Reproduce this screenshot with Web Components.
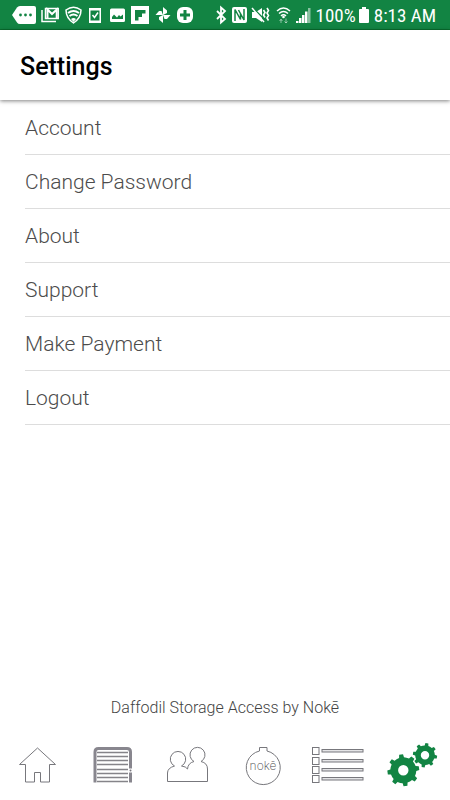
<!DOCTYPE html>
<html lang="en">
<head>
<meta charset="utf-8">
<meta name="viewport" content="width=device-width, initial-scale=1">
<title>Settings</title>
<style>
  body {
    margin: 0;
    font-family: Roboto, "Liberation Sans", sans-serif;
    background: #ffffff;
  }
</style>
</head>
<body>
<settings-app>
  <status-bar slot="status" battery="100%" time="8:13 AM"></status-bar>
  <app-header slot="header">Settings</app-header>
  <settings-item href="#account">Account</settings-item>
  <settings-item href="#password">Change Password</settings-item>
  <settings-item href="#about">About</settings-item>
  <settings-item href="#support">Support</settings-item>
  <settings-item href="#payment">Make Payment</settings-item>
  <settings-item href="#logout">Logout</settings-item>
  <span slot="credit">Daffodil Storage Access by Nokē</span>
  <tab-bar slot="tabs" active="settings"></tab-bar>
</settings-app>

<script>
// Status icons: width and drawing, all 20px high
const STATUS_ICONS = {
  chat: [24, `<path d="M0 10 5 2.500Q6 1 8 1H22Q24 1 24 3V17Q24 19 22 19H8Q6 19 5 17.500Z"/><g fill="#128443"><circle cx="8.500" cy="10" r="1.400"/><circle cx="13.500" cy="10" r="1.400"/><circle cx="18.500" cy="10" r="1.400"/></g>`],
  mail: [17, `<g fill="none" stroke="#fff" stroke-width="1.500"><path d="M0 5V16.500H14"/><path d="M3.500 3.500H16.200V13.500H3.500Z"/><path d="M5.500 13V4.500L10 9 14.700 4.500V13" stroke-width="2"/></g>`],
  shield: [17, `<g fill="none" stroke="#fff"><path d="M1 5Q8.500-.5 16 5 16 13 8.500 18 1 13 1 5Z" stroke-width="1.500"/><path d="M3 8Q8.500 4 14 8M4.500 11Q8.500 8 12.500 11" stroke-width="2"/></g><path d="M6 14Q8.500 12 11 14L8.500 17Z"/>`],
  phone: [16, `<path d="M1 3H13V18H1ZM2.500 5.500V15.500H11.500V5.500Z" fill-rule="evenodd"/><path d="m4.500 10 2 2.500L10 7.500" fill="none" stroke="#fff" stroke-width="1.500"/>`],
  image: [15, `<path d="M1.500 3.500H13.500Q15 3.500 15 5V15.500Q15 17 13.500 17H1.500Q0 17 0 15.500V5Q0 3.500 1.500 3.500ZM2 14H13V9.500L10.500 11.500 9 10 7 12.500 4 9.500 2 12Z" fill-rule="evenodd"/>`],
  flip: [18, `<path d="M0 1H18V19H0ZM4 5V15.500H7.500V12H11V8.500H14.500V5Z" fill-rule="evenodd"/>`],
  pinwheel: [16, `<path d="M8 10V2L12 5.500V8Z"/><path d="M8 10H15.500L12 14H9.500Z"/><path d="M8 10V18L4 14.500V12Z"/><path d="M8 10H.5L4 6H6.500Z"/>`],
  plus: [16, `<rect y="2" width="16" height="16" rx="6"/><path d="M6.500 5H9.500V8.500H13V11.500H9.500V15H6.500V11.500H3V8.500H6.500Z" fill="#128443"/>`],
  bluetooth: [10, `<path d="M0 6 8 14 4 17.500V2.500L8 6 0 14" fill="none" stroke="#fff" stroke-width="1.800"/>`],
  nfc: [15, `<rect y="2" width="15" height="16" rx="2"/><path d="M3 16V4.500L8.500 14.500V8M6.500 5 12 15V4" fill="none" stroke="#128443" stroke-width="1.500"/>`],
  mute: [19, `<path d="M0 7H4L10 3V17L4 13H0Z"/><path d="m1 3 14 14" stroke="#128443" stroke-width="1.500"/><path d="m0 3 12 14" stroke="#fff" stroke-width="1.500"/><path d="m11.500 5 1.500 2.500-1.500 2.500 1.500 2.500M15 3l1.500 2.500L15 8l1.500 2.500L15 13l1.500 2.500" fill="none" stroke="#fff" stroke-width="1.600"/>`],
  wifi: [15, `<g fill="none" stroke="#fff" stroke-width="1.500"><path d="M1 6Q7.500 0 14 6M3 8.500Q7.500 4.500 12 8.500M5 11Q7.500 8.500 10 11"/></g><circle cx="7.500" cy="12" r="1.300"/><path d="M5 18V14M3.500 16 5 14.300 6.500 16M10 13.500V18M8.500 16.500 10 18 11.500 16.500" fill="none" stroke="#fff" opacity=".5"/>`],
  signal: [15, `<path d="M0 16H2.500V18H0ZM3 13H5.500V18H3ZM6 10H8.500V18H6ZM9 6.500H11.500V18H9Z"/><path d="M12 3H14.500V18H12Z" opacity=".5"/>`],
  battery: [10, `<path d="M3 2H7V4H9Q10 4 10 5V17Q10 18 9 18H1Q0 18 0 17V5Q0 4 1 4H3Z"/>`]
};

// A gear with eight teeth round the given centre
function gear(cx, cy, body, outer, hole, turn) {
  const points = [];
  const at = (radius, deg) => {
    const a = (deg + turn) * Math.PI / 180;
    return `${(cx + radius * Math.sin(a)).toFixed(2)} ${(cy - radius * Math.cos(a)).toFixed(2)}`;
  };
  for (let i = 0; i < 8; i++) {
    const mid = i * 45;
    points.push(at(body, mid - 11), at(outer, mid - 7), at(outer, mid + 7), at(body, mid + 11), at(body, mid + 22));
  }
  return `<path fill="#128443" fill-rule="evenodd" d="M${points.join('L')}Z
    M${cx - hole} ${cy}a${hole} ${hole} 0 1 0 ${hole * 2} 0a${hole} ${hole} 0 1 0 ${-hole * 2} 0Z"/>`;
}

const slats = [12, 16, 20, 24, 29, 33, 37, 41].map((y) => `M22 ${y}.500H53`).join('');
const rows = [7, 17, 26, 35].map((y) => `
  <rect x="12.500" y="${y}.500" width="6.500" height="7"/>
  <rect x="22" y="${y + 2.500}" width="41" height="2.500" fill="#e4e4e6"/>`).join('');

const TABS = [
  { id: 'home', label: 'Home', art: `<path d="M37.500 8 19.500 24.500H25.500V42H34.500V32.500H40.500V42H49.500V24.500H55.500Z"/>` },
  { id: 'units', label: 'Units', art: `<path d="M20 42.500V12Q20 8.500 23.500 8.500H52Q55.500 8.500 55.500 12V42.500" stroke="#88868e" stroke-width="3"/><path d="${slats}" stroke="#858489" stroke-width="1.500"/><rect x="54" y="28.500" width="3" height="4" fill="#fff" stroke="none"/><circle cx="55.500" cy="30.500" r="1" fill="#77757c" stroke="none"/>` },
  { id: 'people', label: 'Sharing', art: `<path d="M17.500 41.500V33Q17.500 28 24.500 26A7.700 7.700 0 1 1 31.500 26Q36 26.500 37.500 29 38 23 44 21.500A7.500 7.500 0 1 1 51 21.500Q57.500 23 57.500 29V41.500Z"/>` },
  { id: 'noke', label: 'Nokē', art: `<path d="M34.500 11V7.500H42V11A17 17 0 1 1 34.500 11Z"/><text x="38" y="30" text-anchor="middle" font-family="Inter, Roboto, sans-serif" font-size="12" font-weight="200" fill="#4c4c50" stroke="none">nokē</text>` },
  { id: 'activity', label: 'Activity', art: rows },
  { id: 'settings', label: 'Settings', art: `<g stroke="none">${gear(28.3, 30.3, 13, 16, 5.2, -8)}${gear(50, 15.2, 9.8, 12.2, 4.2, 9)}</g>` }
];

class SettingsApp extends HTMLElement {
  constructor() {
    super();
    this.attachShadow({ mode: 'open' }).innerHTML = `
      <style>
        :host {
          display: flex;
          flex-direction: column;
          min-height: 100vh;
        }
        main {
          flex: 1;
          padding-top: 1px;
        }
        .credit {
          margin: 0;
          padding-bottom: 20px;
          text-align: center;
          font-size: 16px;
          line-height: 24px;
          font-weight: 300;
          color: #444444;
        }
      </style>
      <slot name="status"></slot>
      <slot name="header"></slot>
      <main><slot></slot></main>
      <p class="credit"><slot name="credit"></slot></p>
      <slot name="tabs"></slot>
    `;
  }
}

class StatusIcon extends HTMLElement {
  connectedCallback() {
    const [width, art] = STATUS_ICONS[this.getAttribute('name')];
    this.attachShadow({ mode: 'open' }).innerHTML = `
      <style>
        :host { display: block; flex: none; }
        svg { display: block; overflow: visible; }
      </style>
      <svg width="${width}" height="20" viewBox="0 0 ${width} 20" fill="#fff" aria-hidden="true">${art}</svg>
    `;
  }
}

class StatusBar extends HTMLElement {
  connectedCallback() {
    const icons = (names) => names.map((name) => `<status-icon name="${name}"></status-icon>`).join('');
    this.attachShadow({ mode: 'open' }).innerHTML = `
      <style>
        :host {
          display: flex;
          justify-content: space-between;
          box-sizing: border-box;
          height: 30px;
          padding: 1px 14px 0 12px;
          background: #128443;
          border-bottom: 1px solid #08702f;
          color: #ffffff;
          font-family: "Roboto Condensed", Roboto, sans-serif;
          font-size: 19px;
          line-height: 22px;
          white-space: nowrap;
        }
        div {
          display: flex;
          align-items: center;
          gap: 6px;
        }
        span, time {
          padding-top: 2px;
        }
        .system {
          gap: 5px;
        }
        .power {
          gap: 3px;
        }
      </style>
      <div>${icons(['chat', 'mail', 'shield', 'phone', 'image', 'flip', 'pinwheel', 'plus'])}</div>
      <div class="system">
        ${icons(['bluetooth', 'nfc', 'mute', 'wifi', 'signal'])}
        <div class="power"><span>${this.getAttribute('battery')}</span>${icons(['battery'])}</div>
        <time>${this.getAttribute('time')}</time>
      </div>
    `;
  }
}

class AppHeader extends HTMLElement {
  constructor() {
    super();
    this.attachShadow({ mode: 'open' }).innerHTML = `
      <style>
        :host {
          display: block;
          padding: 20px 20px 16px;
          background: #ffffff;
          box-shadow: 0 1px 4px rgba(0, 0, 0, 0.5);
          position: relative;
        }
        h1 {
          margin: 0;
          font-size: 25px;
          line-height: 34px;
          font-weight: 500;
          color: #000000;
        }
      </style>
      <h1><slot></slot></h1>
    `;
  }
}

class SettingsItem extends HTMLElement {
  connectedCallback() {
    this.attachShadow({ mode: 'open' }).innerHTML = `
      <style>
        :host {
          display: block;
          padding-left: 25px;
        }
        a {
          display: block;
          padding: 14px 0 13px;
          border-bottom: 1px solid #dddddd;
          font-size: 21px;
          line-height: 26px;
          font-weight: 300;
          color: #4c4c4c;
          text-decoration: none;
        }
      </style>
      <a href="${this.getAttribute('href')}"><slot></slot></a>
    `;
  }
}

class TabBar extends HTMLElement {
  connectedCallback() {
    const active = this.getAttribute('active');
    this.attachShadow({ mode: 'open' }).innerHTML = `
      <style>
        :host {
          display: block;
          padding-bottom: 10px;
        }
        nav {
          display: grid;
          grid-template-columns: repeat(6, 1fr);
        }
        a {
          display: flex;
          justify-content: center;
        }
        svg {
          display: block;
          fill: none;
          stroke: #77777c;
          stroke-width: 1;
        }
      </style>
      <nav>
        ${TABS.map((tab) => `
          <a href="#${tab.id}" aria-label="${tab.label}" ${tab.id === active ? 'aria-current="page"' : ''}>
            <svg width="75" height="50" viewBox="0 0 75 50">${tab.art}</svg>
          </a>`).join('')}
      </nav>
    `;
  }
}

customElements.define('status-icon', StatusIcon);
customElements.define('status-bar', StatusBar);
customElements.define('app-header', AppHeader);
customElements.define('settings-item', SettingsItem);
customElements.define('tab-bar', TabBar);
customElements.define('settings-app', SettingsApp);
</script>
</body>
</html>
